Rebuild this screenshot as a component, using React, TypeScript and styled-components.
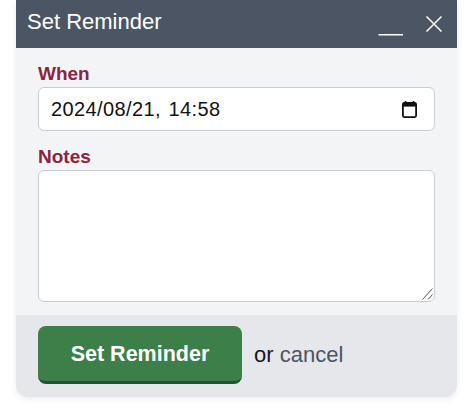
import React from "react";
import styled, { createGlobalStyle } from "styled-components";

const Global = createGlobalStyle`
  html, body {
    margin: 0;
    padding: 0;
    background: #fff;
    font-family: "Liberation Sans", Arial, sans-serif;
  }
`;

export default function App() {
  return (
    <>
      <Global />
      <Page>
        <Dialog>
          <Header>
            <Title>Set Reminder</Title>
            <WindowControls>
              <MinimizeIcon width="26" height="26" viewBox="0 0 26 26">
                <path d="M0.5 23.8H25" stroke="#fff" strokeWidth="1.5" />
              </MinimizeIcon>
              <svg width="16" height="16" viewBox="0 0 16 16">
                <path
                  d="M0.5 0.5L15.5 15.5M15.5 0.5L0.5 15.5"
                  stroke="#fff"
                  strokeWidth="1.5"
                  fill="none"
                />
              </svg>
            </WindowControls>
          </Header>
          <Body>
            <Label>When</Label>
            <DateField>
              <DateText>2024/08/21, 14:58</DateText>
              <svg width="15" height="17" viewBox="0 0 15 17">
                <path d="M3.5 0V3M11.5 0V3" stroke="#111" strokeWidth="1.6" />
                <rect x="0.9" y="2" width="13.2" height="14.1" rx="1.5" fill="none" stroke="#111" strokeWidth="1.8" />
                <rect x="0.9" y="2" width="13.2" height="3.6" fill="#111" />
              </svg>
            </DateField>
            <NotesLabel>Notes</NotesLabel>
            <NotesWrap>
              <Notes />
              <ResizeGrip width="11" height="12" viewBox="0 0 11 12">
                <path d="M0.5 11.5L10.5 0.5M6 11.5L10.5 6.5" stroke="#555" strokeWidth="1" fill="none" />
              </ResizeGrip>
            </NotesWrap>
          </Body>
          <Footer>
            <SubmitButton>Set Reminder</SubmitButton>
            <FooterText>
              or <CancelLink>cancel</CancelLink>
            </FooterText>
          </Footer>
        </Dialog>
      </Page>
    </>
  );
}

const Page = styled.div`
  width: 474px;
  height: 414px;
  overflow: hidden;
  padding: 0 17px 0 16px;
  box-sizing: border-box;
`;

const Dialog = styled.div`
  height: 397px;
  display: flex;
  flex-direction: column;
  background: #f3f4f6;
  border-radius: 0 0 12px 12px;
  box-shadow: 0 2px 6px rgba(0, 0, 0, 0.08);
  overflow: hidden;
`;

const Header = styled.div`
  height: 48px;
  flex: none;
  display: flex;
  align-items: center;
  justify-content: space-between;
  padding: 0 15px 5px 11px;
  box-sizing: border-box;
  background: #4b5563;
`;

const Title = styled.div`
  font-size: 22px;
  color: #fff;
`;

const WindowControls = styled.div`
  display: flex;
  align-items: center;
  gap: 22px;
  margin-top: 5px;
`;

const MinimizeIcon = styled.svg`
  display: block;
`;

const Body = styled.div`
  flex: 1;
  display: flex;
  flex-direction: column;
  padding: 15px 22px 13px;
`;

const Label = styled.div`
  font-size: 19px;
  line-height: 22px;
  font-weight: 700;
  color: #8a2440;
  margin-bottom: 2px;
`;

const NotesLabel = styled(Label)`
  margin-top: 15px;
`;

const DateField = styled.div`
  height: 44px;
  flex: none;
  box-sizing: border-box;
  display: flex;
  align-items: center;
  justify-content: space-between;
  padding: 0 17px 0 12px;
  background: #fff;
  border: 1px solid #c9ccd2;
  border-radius: 6px;
`;

const DateText = styled.span`
  font-size: 20px;
  letter-spacing: 0.4px;
  word-spacing: 1.5px;
  color: #111;
`;

const NotesWrap = styled.div`
  position: relative;
  height: 132px;
`;

const Notes = styled.textarea`
  display: block;
  width: 100%;
  height: 100%;
  box-sizing: border-box;
  background: #fff;
  border: 1px solid #c9ccd2;
  border-radius: 6px;
  outline: none;
  resize: none;
`;

const ResizeGrip = styled.svg`
  position: absolute;
  right: 2px;
  bottom: 2px;
`;

const Footer = styled.div`
  height: 82px;
  flex: none;
  box-sizing: border-box;
  display: flex;
  align-items: flex-start;
  gap: 12px;
  padding: 11px 22px 0;
  background: #e5e7eb;
`;

const SubmitButton = styled.button`
  width: 204px;
  height: 58px;
  padding: 2px 0 0;
  border: none;
  border-bottom: 3px solid #22552f;
  border-radius: 8px;
  background: #3c7f48;
  color: #fff;
  font-family: inherit;
  font-size: 21.5px;
  font-weight: 700;
`;

const FooterText = styled.div`
  align-self: center;
  margin-top: -13px;
  font-size: 22px;
  color: #111827;
`;

const CancelLink = styled.a`
  color: #4b5563;
`;
